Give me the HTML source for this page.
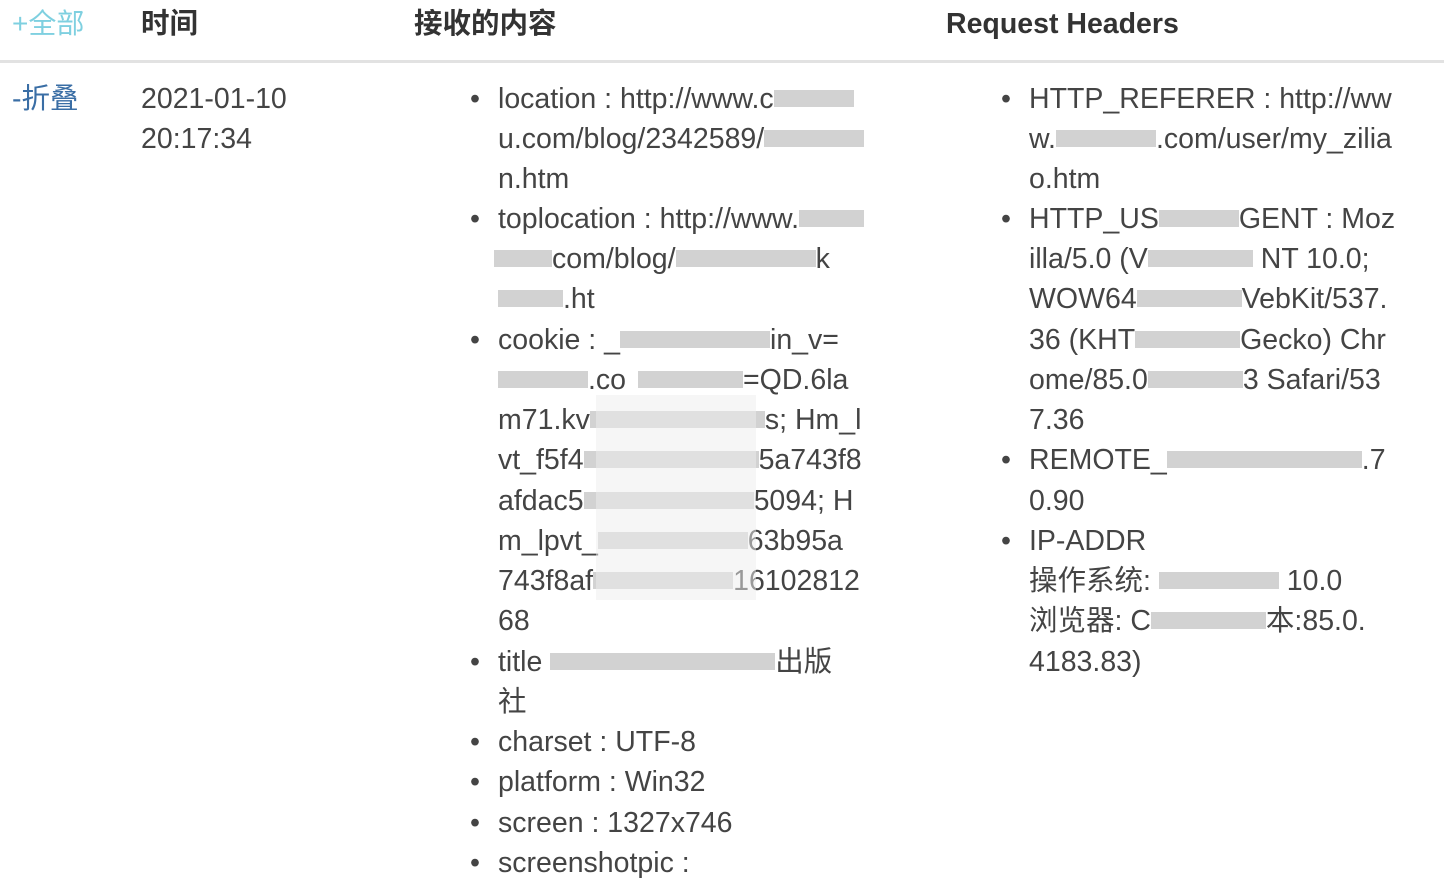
<!DOCTYPE html>
<html><head><meta charset="utf-8"><style>
body{margin:0;width:1444px;height:873px;overflow:hidden;background:#fff;font-family:"Liberation Sans","Noto Sans CJK SC",sans-serif;color:#333;position:relative}
.h{position:absolute;top:4px;font-size:28.5px;font-weight:bold;line-height:40px;color:#333}
.line{position:absolute;left:0;right:0;top:60px;height:3px;background:#e2e2e2}
.l{position:absolute;font-size:28.5px;line-height:40px;white-space:nowrap;color:#444}
.b{display:inline-block;height:17px;background:#d2d2d2;vertical-align:middle;margin-top:-4px}
.bl{position:absolute;left:-28px;}
</style></head><body>
<div class="h" style="left:12px;color:#7fd0e0;font-weight:normal;font-size:28px">+全部</div>
<div class="h" style="left:141px">时间</div>
<div class="h" style="left:414px">接收的内容</div>
<div class="h" style="left:946px">Request Headers</div>
<div class="line"></div>
<div class="l" style="left:12px;top:79px;color:#3a6ea5">-折叠</div>
<div class="l" style="left:141px;top:79px">2021-01-10</div>
<div class="l" style="left:141px;top:119px">20:17:34</div>

<div style="position:absolute;left:498px;top:1px">
<div class="l" style="top:78px"><span class="bl">•</span>location : http://www.c<span class="b" style="width:80px"></span></div>
<div class="l" style="top:118px">u.com/blog/2342589/<span class="b" style="width:100px"></span></div>
<div class="l" style="top:158px">n.htm</div>
<div class="l" style="top:198px"><span class="bl">•</span>toplocation : http://www.<span class="b" style="width:65px"></span></div>
<div class="l" style="top:238px"><span class="b" style="width:58px;margin-left:-4px"></span>com/blog/<span class="b" style="width:140px"></span>k</div>
<div class="l" style="top:278px"><span class="b" style="width:65px"></span>.ht</div>
<div class="l" style="top:319px"><span class="bl">•</span>cookie : _<span class="b" style="width:150px"></span>in_v=</div>
<div class="l" style="top:359px"><span class="b" style="width:90px"></span>.co<span class="b" style="width:105px;margin-left:12px"></span>=QD.6la</div>
<div class="l" style="top:399px">m71.kv<span class="b" style="width:175px"></span>s; Hm_l</div>
<div class="l" style="top:439px">vt_f5f4<span class="b" style="width:175px"></span>5a743f8</div>
<div class="l" style="top:480px">afdac5<span class="b" style="width:170px"></span>5094; H</div>
<div class="l" style="top:520px">m_lpvt_<span class="b" style="width:150px"></span>63b95a</div>
<div class="l" style="top:560px">743f8af<span class="b" style="width:140px"></span>16102812</div>
<div class="l" style="top:600px">68</div>
<div class="l" style="top:641px"><span class="bl">•</span>title <span class="b" style="width:225px"></span>出版</div>
<div class="l" style="top:681px">社</div>
<div class="l" style="top:721px"><span class="bl">•</span>charset : UTF-8</div>
<div class="l" style="top:761px"><span class="bl">•</span>platform : Win32</div>
<div class="l" style="top:802px"><span class="bl">•</span>screen : 1327x746</div>
<div class="l" style="top:842px"><span class="bl">•</span>screenshotpic :</div>
</div>
<div style="position:absolute;left:596px;top:395px;width:160px;height:205px;background:#eee;opacity:.5"></div>

<div style="position:absolute;left:1029px;top:1px">
<div class="l" style="top:78px"><span class="bl">•</span>HTTP_REFERER : http://ww</div>
<div class="l" style="top:118px">w.<span class="b" style="width:100px"></span>.com/user/my_zilia</div>
<div class="l" style="top:158px">o.htm</div>
<div class="l" style="top:198px"><span class="bl">•</span>HTTP_US<span class="b" style="width:80px"></span>GENT : Moz</div>
<div class="l" style="top:238px">illa/5.0 (V<span class="b" style="width:105px"></span> NT 10.0;</div>
<div class="l" style="top:278px">WOW64<span class="b" style="width:105px"></span>VebKit/537.</div>
<div class="l" style="top:319px">36 (KHT<span class="b" style="width:105px"></span>Gecko) Chr</div>
<div class="l" style="top:359px">ome/85.0<span class="b" style="width:95px"></span>3 Safari/53</div>
<div class="l" style="top:399px">7.36</div>
<div class="l" style="top:439px"><span class="bl">•</span>REMOTE_<span class="b" style="width:195px"></span>.7</div>
<div class="l" style="top:480px">0.90</div>
<div class="l" style="top:520px"><span class="bl">•</span>IP-ADDR</div>
<div class="l" style="top:560px">操作系统: <span class="b" style="width:120px"></span> 10.0</div>
<div class="l" style="top:600px">浏览器: C<span class="b" style="width:115px"></span>本:85.0.</div>
<div class="l" style="top:641px">4183.83)</div>
</div>
</body></html>
